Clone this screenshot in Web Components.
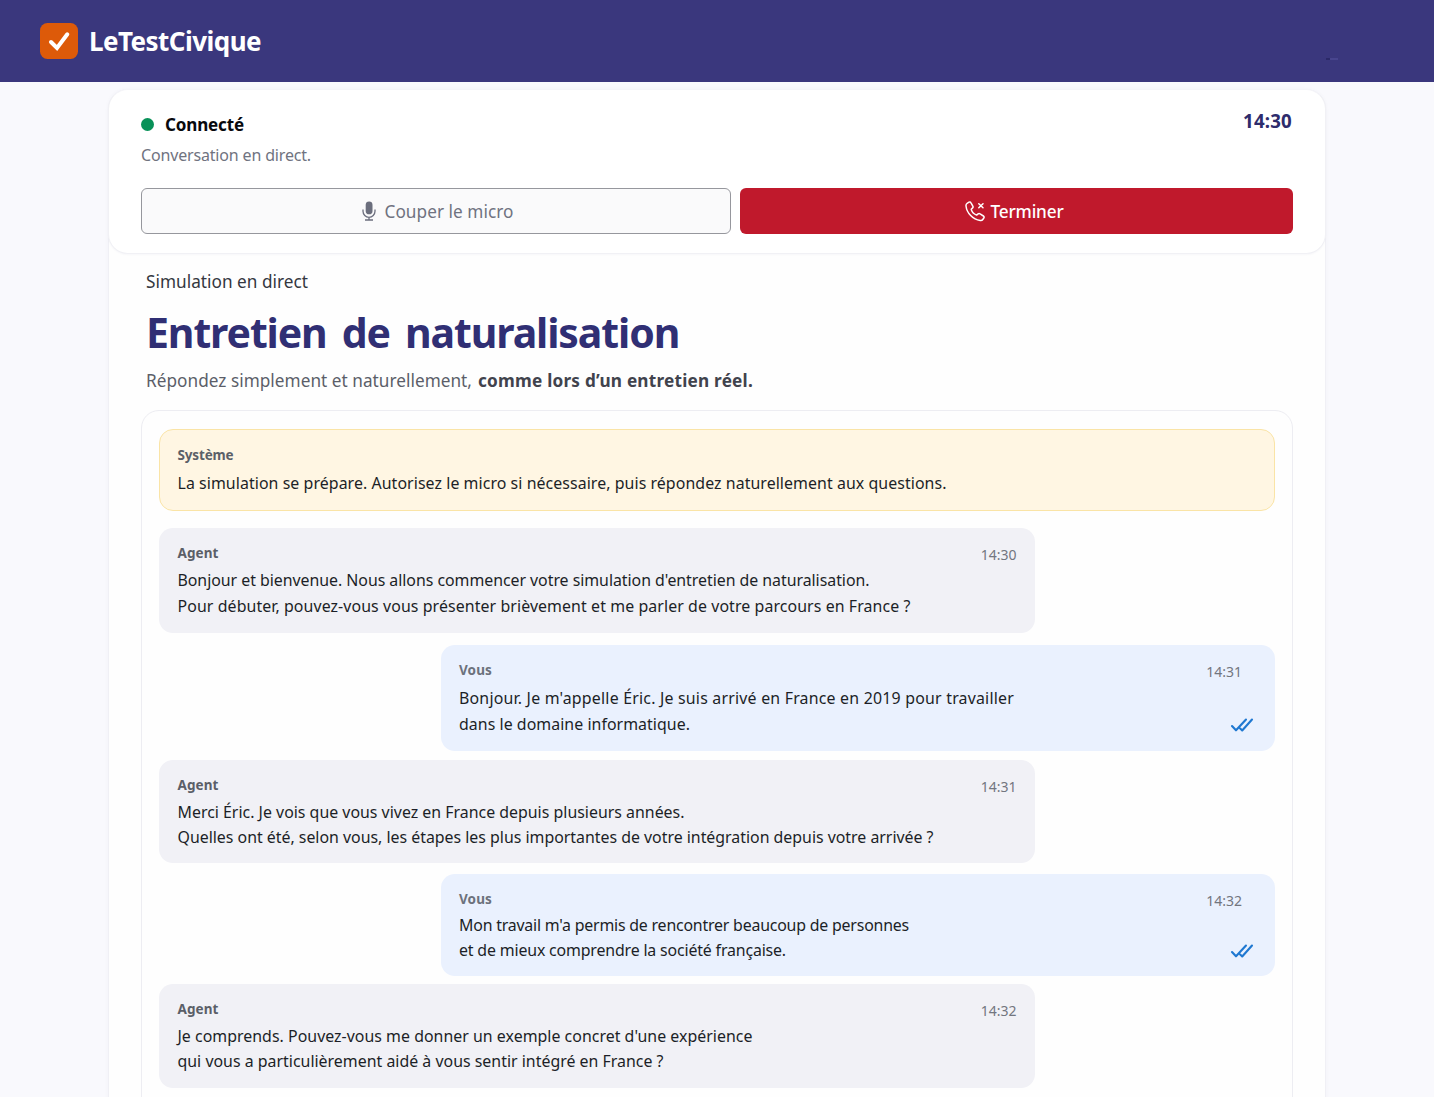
<!DOCTYPE html>
<html lang="fr">
<head>
<meta charset="utf-8">
<title>LeTestCivique</title>
<style>
html,body{margin:0;height:100%;overflow:hidden}
body{font-family:"Noto Sans","Open Sans",sans-serif;background:#f9f9fd;color:#1d2029}
</style>
</head>
<body>
<civic-app></civic-app>
<script>
const define = (name, html) => {
  const t = document.createElement('template');
  t.innerHTML = html;
  customElements.define(name, class extends HTMLElement {
    constructor() { super(); this.attachShadow({mode: 'open'}).append(t.content.cloneNode(true)); }
  });
};

define('text-line', `<style>
:host{display:block;white-space:nowrap;letter-spacing:var(--ls,0);word-spacing:var(--ws,0)}
</style><slot></slot>`);

define('civic-header', `<style>
:host{display:flex;align-items:center;gap:11px;height:82px;box-sizing:border-box;padding:0 96px 0 40px;background:#3a377d;color:#fff}
svg{display:block;width:38px;height:38px}
text-line{font-size:26px;font-weight:700;line-height:40px}
.mark{width:12px;height:2px;margin:35px 0 0 auto}
</style>
<svg viewBox="0 0 38 38"><rect x="0" y="1" width="38" height="36" rx="7.5" fill="#dd5a09"/><path d="M11 20 17 26 27.300 12.300" fill="none" stroke="#fff" stroke-width="4" stroke-linecap="round"/></svg>
<text-line style="--ls:-.542px">LeTestCivique</text-line>
<svg class="mark" viewBox="0 0 12 2"><path d="M0 1h4" stroke="#2b2968" stroke-width="2"/><path d="M4 1h8" stroke="#5654a0" stroke-width="1"/></svg>`);

define('action-button', `<style>
:host{display:flex;align-items:center;justify-content:center;gap:var(--gap,5px);height:46px;box-sizing:border-box;border-radius:6px;font-size:17.2px}
:host([kind=mute]){background:#fafafb;border:1px solid #96979d;color:#6f7280;padding-left:3px}
:host([kind=end]){background:#c0192c;color:#fff;font-weight:500;padding-right:5px}
</style><slot name="icon"></slot><slot></slot>`);

define('status-card', `<style>
:host{display:block;height:165px;box-sizing:border-box;padding:18px 32px 0;margin:0 -1px;background:#fff;border-radius:20px;border:1px solid #f1f1f5;border-top-color:#f4f4f8;box-shadow:0 1px 2px #1f205008}
.top{display:flex;justify-content:space-between;height:80px}
.state{display:flex;align-items:center;gap:11px;height:32px}
.dot{width:13px;height:13px;border-radius:50%;background:#089158}
.state text-line{font-size:17px;font-weight:700;color:#08090d}
.sub{font-size:16px;line-height:30px;color:#70737f}
.clock{font-size:18.7px;font-weight:700;line-height:26px;color:#2e2c6c;padding-right:1px}
.actions{display:grid;grid-template-columns:590px 553px;gap:9px}
svg{display:block}
</style>
<div class="top"><div><div class="state"><span class="dot"></span><text-line style="--ls:-.137px">Connecté</text-line></div><text-line class="sub" style="--ls:-.166px">Conversation en direct.</text-line></div><text-line class="clock" style="--ls:.18px">14:30</text-line></div>
<div class="actions">
<action-button kind="mute" style="--gap:9px"><svg slot="icon" width="14" height="20" viewBox="0 0 14 20"><rect x="3.700" y=".5" width="6.800" height="12.800" rx="3.400" fill="#6b6e7d"/><path d="M1 8.500v1.800a6 6 0 0 0 12 0V8.500M7 16.300v2.400M3 19h8" fill="none" stroke="#6b6e7d" stroke-width="1.300"/></svg><text-line style="--ls:.051px">Couper le micro</text-line></action-button>
<action-button kind="end"><svg slot="icon" width="21" height="21" viewBox="0 0 21 21" fill="none" stroke="#fff" stroke-width="1.500" stroke-linecap="round" stroke-linejoin="round"><path d="M2.100 2.300 4 1.200c.8-.4 1.600-.2 2 .6l1.800 3.300c.4.7.2 1.500-.4 2L6.200 8.200c.5 2.600 2.700 4.900 5.400 5.900l1.500-1.200c.6-.5 1.400-.5 2 0l3.300 2.100c.8.5.9 1.300.4 2l-1 1.500c-.5.8-1.500 1.200-2.600 1C7.900 18.500 1.800 12.200 1 5c-.1-1.200.2-2.200 1.100-2.700Z"/><path d="m13.800 2.700 4.200 4m0-4-4.200 4"/></svg><text-line style="--ls:-.178px">Terminer</text-line></action-button>
</div>`);

define('page-intro', `<style>
:host{display:block;padding:15px 0 0 37px}
.eyebrow{font-size:17.2px;line-height:26px;color:#343740}
.title{font-size:41px;font-weight:700;line-height:60px;margin:7px 0 0;color:#302f74}
.desc{font-size:17.2px;line-height:26px;margin-top:6px;color:#5b5e69;display:flex;gap:6px}
b{color:#41434d}
</style>
<text-line class="eyebrow" style="--ls:.027px">Simulation en direct</text-line>
<text-line class="title" style="--ls:-1.100px;--ws:5.500px">Entretien de naturalisation</text-line>
<div class="desc"><text-line style="--ls:.033px">Répondez simplement et naturellement,</text-line><b><text-line style="--ls:.219px">comme lors d’un entretien réel.</text-line></b></div>`);

define('read-ticks', `<style>:host{display:block}svg{display:block}</style>
<svg width="24" height="16" viewBox="0 0 24 16" fill="none" stroke="#1f78d1" stroke-width="2.100" stroke-linecap="round" stroke-linejoin="round"><path d="M2 9 6 13.300 16 2.500M10.200 11.600l2 1.900L22 2.500"/></svg>`);

define('chat-message', `<style>
:host{display:flex;justify-content:space-between;box-sizing:border-box;height:var(--h);margin-top:var(--mt,0);padding:15px 18.500px 0 18.500px;border-radius:14px}
:host([from=system]){background:#fff6e3;border:1px solid #fae4a6;padding:15px 17px 0 17.500px}
:host([from=agent]){background:#f1f1f6;width:876px}
:host([from=user]){background:#eaf1fe;width:834px;margin-left:auto;padding-right:21px;padding-left:18px}
.who{font-size:13.500px;font-weight:700;line-height:20px;color:#5b5f68}
:host([from=user]) .who{color:#6c717c}
.body{font-size:15.900px;line-height:var(--lh,25px);margin-top:var(--gap,5px);color:#1c1f27}
.side{display:flex;flex-direction:column;align-items:flex-end}
.time{font-size:14px;line-height:20px;padding-top:2px;color:#73767f}
:host([from=user]) .time{padding-right:12px}
.tick{margin-top:var(--tick,35px)}
</style>
<div><div class="who"><slot name="who"></slot></div><div class="body"><slot></slot></div></div>
<div class="side"><div class="time"><slot name="time"></slot></div><div class="tick"><slot name="tick"></slot></div></div>`);

define('chat-log', `<style>
:host{display:block;box-sizing:border-box;margin:16px 32px 0;width:1152px;height:720px;padding:18px 17px;border:1px solid #ededf2;border-radius:18px;background:#fefefe}
</style>
<chat-message from="system" style="--h:82px;--gap:6px"><text-line slot="who" style="--ls:-.15px">Système</text-line><text-line style="--ls:.071px">La simulation se prépare. Autorisez le micro si nécessaire, puis répondez naturellement aux questions.</text-line></chat-message>
<chat-message from="agent" style="--h:105px;--mt:17px;--lh:26px;--gap:4px"><text-line slot="who" style="--ls:.1px">Agent</text-line><text-line slot="time">14:30</text-line><text-line style="--ls:-.034px">Bonjour et bienvenue. Nous allons commencer votre simulation d'entretien de naturalisation.</text-line><text-line style="--ls:.093px">Pour débuter, pouvez-vous vous présenter brièvement et me parler de votre parcours en France ?</text-line></chat-message>
<chat-message from="user" style="--h:106px;--mt:12px;--lh:26px;--gap:5px"><text-line slot="who" style="--ls:.1px">Vous</text-line><text-line slot="time">14:31</text-line><text-line style="--ls:.212px">Bonjour. Je m'appelle Éric. Je suis arrivé en France en 2019 pour travailler</text-line><text-line style="--ls:.048px">dans le domaine informatique.</text-line><read-ticks slot="tick"></read-ticks></chat-message>
<chat-message from="agent" style="--h:103px;--mt:9px"><text-line slot="who" style="--ls:.1px">Agent</text-line><text-line slot="time">14:31</text-line><text-line style="--ls:.008px">Merci Éric. Je vois que vous vivez en France depuis plusieurs années.</text-line><text-line style="--ls:-.008px">Quelles ont été, selon vous, les étapes les plus importantes de votre intégration depuis votre arrivée ?</text-line></chat-message>
<chat-message from="user" style="--h:102px;--mt:11px;--gap:4px;--tick:32px"><text-line slot="who" style="--ls:.1px">Vous</text-line><text-line slot="time">14:32</text-line><text-line style="--ls:-.199px">Mon travail m'a permis de rencontrer beaucoup de personnes</text-line><text-line style="--ls:-.155px">et de mieux comprendre la société française.</text-line><read-ticks slot="tick"></read-ticks></chat-message>
<chat-message from="agent" style="--h:104px;--mt:8px"><text-line slot="who" style="--ls:.1px">Agent</text-line><text-line slot="time">14:32</text-line><text-line style="--ls:.028px">Je comprends. Pouvez-vous me donner un exemple concret d'une expérience</text-line><text-line style="--ls:.013px">qui vous a particulièrement aidé à vous sentir intégré en France ?</text-line></chat-message>`);

define('civic-app', `<style>
:host{display:block;height:1097px;overflow:hidden}
main{display:block;width:1216px;height:1100px;margin:7px 0 0 108px;border:1px solid #f0f0f5;border-radius:20px 20px 0 0;background:#fefefe;box-shadow:0 0 4px #1f205008}
status-card{margin-top:-1px}
</style><civic-header></civic-header><main><status-card></status-card><page-intro></page-intro><chat-log></chat-log></main>`);
</script>
</body>
</html>
